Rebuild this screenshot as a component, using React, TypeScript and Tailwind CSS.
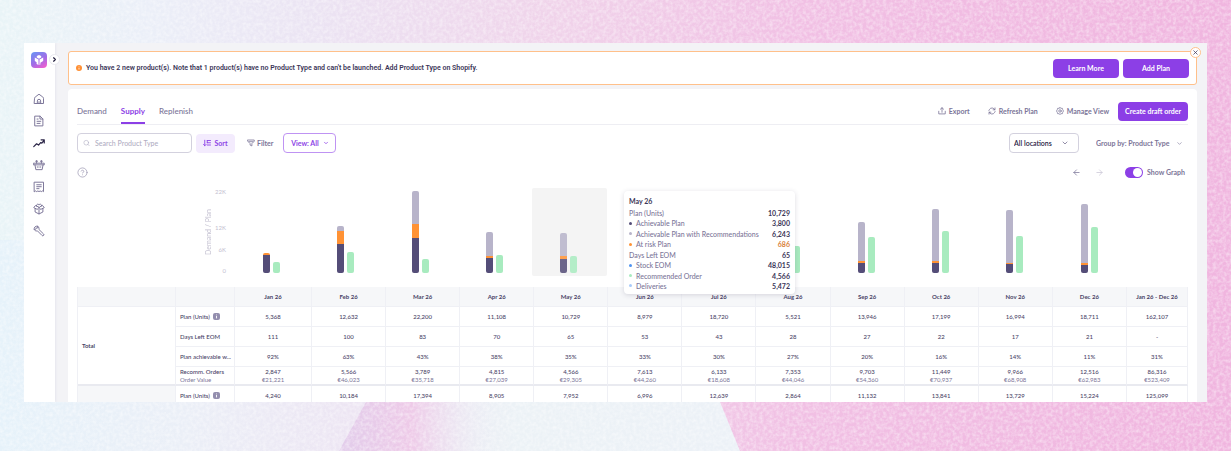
import { useState } from 'react';
import type { ReactNode } from 'react';
import { ArrowLeft, ArrowRight, ChevronDown, ChevronRight, CircleHelp, Search, X } from 'lucide-react';

type Month = {
  label: string;
  achievable: number;
  atRisk: number;
  withRecs: number;
  order: number;
};

// plot area is 82px tall for the biggest month
const PX_PER_UNIT = 82 / 22200;

const months: Month[] = [
  { label: 'Jan 26', achievable: 4940, atRisk: 428, withRecs: 0, order: 2847 },
  { label: 'Feb 26', achievable: 7958, atRisk: 3390, withRecs: 1284, order: 5566 },
  { label: 'Mar 26', achievable: 9546, atRisk: 3700, withRecs: 8954, order: 3789 },
  { label: 'Apr 26', achievable: 4121, atRisk: 580, withRecs: 6407, order: 4815 },
  { label: 'May 26', achievable: 3800, atRisk: 686, withRecs: 6243, order: 4566 },
  { label: 'Jun 26', achievable: 2963, atRisk: 500, withRecs: 5516, order: 7613 },
  { label: 'Jul 26', achievable: 5616, atRisk: 600, withRecs: 12504, order: 6133 },
  { label: 'Aug 26', achievable: 1490, atRisk: 400, withRecs: 3631, order: 7353 },
  { label: 'Sep 26', achievable: 2789, atRisk: 560, withRecs: 10597, order: 9703 },
  { label: 'Oct 26', achievable: 2751, atRisk: 560, withRecs: 13888, order: 11449 },
  { label: 'Nov 26', achievable: 2379, atRisk: 320, withRecs: 14295, order: 9966 },
  { label: 'Dec 26', achievable: 2058, atRisk: 560, withRecs: 16093, order: 12516 },
];

const rows = {
  plan: ['5,368', '12,632', '22,200', '11,108', '10,729', '8,979', '18,720', '5,521', '13,946', '17,199', '16,994', '18,711', '162,107'],
  days: ['111', '100', '83', '70', '65', '53', '43', '28', '27', '22', '17', '21', '-'],
  achievable: ['92%', '63%', '43%', '38%', '35%', '33%', '30%', '27%', '20%', '16%', '14%', '11%', '31%'],
  orders: ['2,847', '5,566', '3,789', '4,815', '4,566', '7,613', '6,133', '7,353', '9,703', '11,449', '9,966', '12,516', '86,316'],
  value: ['€21,221', '€46,023', '€35,718', '€27,039', '€29,305', '€44,260', '€18,608', '€44,046', '€54,360', '€70,937', '€68,908', '€62,983', '€523,409'],
  nextPlan: ['4,240', '10,184', '17,394', '8,905', '7,952', '6,996', '12,639', '2,864', '11,132', '13,841', '13,729', '15,224', '125,099'],
};

const tooltipRows = [
  { label: 'Plan (Units)', value: '10,729' },
  { label: 'Achievable Plan', value: '3,800', dot: 'bg-[#544d78]' },
  { label: 'Achievable Plan with Recommendations', value: '6,243', dot: 'bg-[#b8b4ca]' },
  { label: 'At risk Plan', value: '686', dot: 'bg-[#ff9234]', tone: 'text-[#d9823b]' },
  { label: 'Days Left EOM', value: '65' },
  { label: 'Stock EOM', value: '48,015', dot: 'bg-[#4f93f0]' },
  { label: 'Recommended Order', value: '4,566', dot: 'bg-[#a8ebbf]' },
  { label: 'Deliveries', value: '5,472', dot: 'bg-[#a9cbfa]' },
];

const Backdrop = () => (
  <svg
    className="absolute inset-0 h-full w-full"
    viewBox="0 0 1231 451"
    preserveAspectRatio="none"
    aria-hidden="true"
  >
    <defs>
      <linearGradient id="sky" x1="0" x2="1" y1="0" y2="0">
        <stop offset="0" stopColor="#e9f4f7" />
        <stop offset="0.12" stopColor="#ebeff8" />
        <stop offset="0.25" stopColor="#ebe4f3" />
        <stop offset="0.45" stopColor="#f0d3ea" />
        <stop offset="0.65" stopColor="#f1c0e4" />
        <stop offset="1" stopColor="#f0b5df" />
      </linearGradient>
      <linearGradient id="pale" x1="0" x2="1" y1="0" y2="0">
        <stop offset="0" stopColor="#e6f2fa" />
        <stop offset="0.25" stopColor="#ebeff7" />
        <stop offset="0.48" stopColor="#ede5f3" />
        <stop offset="0.7" stopColor="#ecf2f6" />
        <stop offset="1" stopColor="#ecf1f7" />
      </linearGradient>
      <linearGradient id="fold" x1="0" x2="1" y1="0" y2="0">
        <stop offset="0" stopColor="#e2cdeb" />
        <stop offset="0.45" stopColor="#eecae8" />
        <stop offset="1" stopColor="#ecf2f6" stopOpacity="0" />
      </linearGradient>
      <filter id="grain" x="0" y="0" width="100%" height="100%" colorInterpolationFilters="sRGB">
        <feTurbulence type="fractalNoise" baseFrequency="0.3" numOctaves="2" seed="4" />
        <feColorMatrix values="0 0 0 0 1  0 0 0 0 1  0 0 0 0 1  0.9 0 0 0 -0.32" />
      </filter>
    </defs>
    <rect width="1231" height="451" fill="url(#sky)" />
    <path d="M0 240H690L720 402L740 451H0Z" fill="url(#pale)" />
    <path d="M366 402H500V451H339Z" fill="url(#fold)" />
    <rect width="1231" height="451" filter="url(#grain)" />
  </svg>
);

const Glyph = ({ children, size = 12 }: { children: ReactNode; size?: number }) => (
  <svg
    width={size}
    height={size}
    viewBox="0 0 16 16"
    fill="none"
    stroke="currentColor"
    strokeWidth="1.3"
    strokeLinecap="round"
    strokeLinejoin="round"
    aria-hidden="true"
  >
    {children}
  </svg>
);

const navItems = [
  {
    name: 'Home',
    icon: <path d="M2 7.2C2 6.4 2.3 5.9 2.9 5.4L8 1.6l5.1 3.8c.6.5.9 1 .9 1.8V14H2zM5.8 14v-3.4a2.2 2.2 0 0 1 4.4 0V14M8 11.6V14" />,
  },
  {
    name: 'Documents',
    icon: <path d="M2.8 1.5h6.7l3.7 3.7v9.3H2.8zM9.3 1.7v3.7h3.7M5.4 8.4h5M5.4 11.2h4M5.4 5.4h1.4" />,
  },
  {
    name: 'Planning',
    active: true,
    icon: <path strokeWidth="1.6" d="M1 12.8 4.8 9l2.6 1.8 2.8-3.4 1.6.8L15 4.2M10.8 3.8H15V8" />,
  },
  {
    name: 'Orders',
    icon: <path d="M1 5.6h14v2.2H1zM2.6 7.8l1.2 6.4h8.4l1.2-6.4M4.8 5.6V2M11.2 5.6V2M3.6 3h2.4M10 3h2.4M5.8 10.4v.6M8 10.4v.6M10.2 10.4v.6" />,
  },
  {
    name: 'Invoices',
    icon: <path d="M2 1.6h12v12.6l-1.5-1-1.5 1-1.5-1-1.5 1-1.5-1-1.5 1-1.5-1-1.5 1zM5 5h6M5 7.6h6M5 10.2h3" />,
  },
  {
    name: 'Inventory',
    icon: <path d="M8 5.6 3.2 3.4 1 6.2l4.9 2.4L8 5.6l2.1 3L15 6.2l-2.2-2.8zM2.8 7.6V12L8 14.6l5.2-2.6V7.6M8 8.4v6.2M4.6 4a1.8 1.8 0 0 1 3.4-1.2A1.8 1.8 0 0 1 11.4 4" />,
  },
  {
    name: 'Tools',
    icon: <path d="M6.2 1.7a3.6 3.6 0 0 0-4.5 4.5l2-.6.9-1.8 1.6-.1zM1.7 6.2c1 1.6 2.6 2.1 4.2 1.6l6.2 6.2a1.4 1.4 0 0 0 2-2L7.9 5.9c.4-1.7-.1-3.3-1.7-4.2" />,
  },
];

const Sidebar = () => (
  <aside className="relative z-10 flex w-[31px] shrink-0 flex-col items-center bg-white pt-[9px] pr-px shadow-[1px_0_2px_#e7e7ee]">
    <svg width="16" height="16" viewBox="0 0 16 16" aria-label="Logo" role="img">
      <defs>
        <linearGradient id="logo" x1="0.2" x2="0.8" y1="0" y2="1">
          <stop offset="0" stopColor="#6f90f3" />
          <stop offset="0.55" stopColor="#a26ce6" />
          <stop offset="1" stopColor="#ee5fd0" />
        </linearGradient>
      </defs>
      <rect width="16" height="16" rx="4" fill="url(#logo)" />
      <path d="M8 3 10.2 4.1V5.6L8 6.8 5.8 5.6V4.1z" fill="#fff" />
      <path d="M3.8 5.4 7.5 7.6V13L5.6 11.9V10.2L3.8 9.1zM12.2 5.4 8.5 7.6V13L9.4 12.4V10.8L12.2 9.1z" fill="#fff" />
    </svg>
    <button
      aria-label="Expand menu"
      className="absolute top-[11px] -right-[5px] flex size-[11px] items-center justify-center rounded-full border border-[#e9e9f0] bg-white text-[#1f1b3a]"
    >
      <ChevronRight size={7} strokeWidth={4} />
    </button>
    <nav className="mt-[20px] flex flex-col">
      {navItems.map(item => (
        <a
          key={item.name}
          href="#"
          aria-label={item.name}
          className={`flex h-[22px] items-center ${item.active ? 'text-[#2b2547]' : 'text-[#7b7598]'}`}
        >
          <Glyph>{item.icon}</Glyph>
        </a>
      ))}
    </nav>
  </aside>
);

const Banner = () => (
  <div className="relative flex h-[34px] items-center rounded-[3px] border border-[#ffc08a] bg-white pr-[7px] pl-[7px]">
    <svg width="6" height="6" viewBox="0 0 6 6" aria-hidden="true">
      <circle cx="3" cy="3" r="3" fill="#ff8f33" />
      <path d="M3 2.7v1.8M3 1.4v.5" stroke="#fff" strokeWidth="0.8" />
    </svg>
    <p className="ml-1 font-['Roboto',sans-serif] text-[7px] font-semibold text-[#3c3658]">
      You have 2 new product(s). Note that 1 product(s) have no Product Type and can't be launched. Add Product Type on Shopify.
    </p>
    <div className="ml-auto flex gap-1 text-[7px] font-bold text-white">
      <button className="h-[19px] w-[66px] rounded-[4px] bg-[#8c3fe6]">Learn More</button>
      <button className="h-[19px] w-[66px] rounded-[4px] bg-[#8c3fe6]">Add Plan</button>
    </div>
    <button
      aria-label="Dismiss"
      className="absolute -top-[5px] -right-[5px] flex size-[11px] items-center justify-center rounded-full border border-[#ffc08a] bg-white text-[#3c3658]"
    >
      <X size={7} strokeWidth={2.5} />
    </button>
  </div>
);

const TabBar = () => {
  const [tab, setTab] = useState('Supply');

  return (
    <div className="flex h-[25px] items-start border-b border-[#eeeef3]">
      <div role="tablist" className="flex gap-[14px] text-[8px] font-medium">
        {['Demand', 'Supply', 'Replenish'].map(name => (
          <button
            key={name}
            role="tab"
            aria-selected={tab === name}
            onClick={() => setTab(name)}
            className={`h-[24px] border-b-2 ${
              tab === name ? 'border-[#8c3fe6] font-bold text-[#8c3fe6]' : 'border-transparent text-[#7b7598]'
            }`}
          >
            {name}
          </button>
        ))}
      </div>
      <div className="ml-auto flex h-[22px] items-center text-[7px] font-bold text-[#7b7598]">
        <button className="flex items-center gap-[3px]">
          <Glyph size={8}>
            <path strokeWidth="1.6" d="M8 10.5V1.5M4.8 4.4 8 1.5l3.2 2.9M1.5 8.5v5.3h13V8.5" />
          </Glyph>
          Export
        </button>
        <button className="ml-[18px] flex items-center gap-[3px]">
          <Glyph size={8}>
            <path strokeWidth="1.6" d="M13.6 5.6A6 6 0 0 0 3 4.8L1.8 7M2.4 10.4A6 6 0 0 0 13 11.2L14.2 9M14 1.8v3.8h-3.8M2 14.2v-3.8h3.8" />
          </Glyph>
          Refresh Plan
        </button>
        <button className="ml-[18px] flex items-center gap-[3px]">
          <Glyph size={8}>
            <path strokeWidth="1.5" d="M8 1 10 2.6 12.8 2.7 13.4 5.3 15 8 13.4 10.7 12.8 13.3 10 13.4 8 15 6 13.4 3.2 13.3 2.6 10.7 1 8 2.6 5.3 3.2 2.7 6 2.6z" />
            <circle strokeWidth="1.5" cx="8" cy="8" r="2.5" />
          </Glyph>
          Manage View
        </button>
        <button className="ml-[9px] h-[19px] rounded-[4px] bg-[#8c3fe6] px-[7px] text-white">
          Create draft order
        </button>
      </div>
    </div>
  );
};

const Filters = () => (
  <div className="mt-2 flex h-[20px] items-center text-[7px] font-bold">
    <label className="flex h-full w-[115px] items-center gap-[5px] rounded-[4px] border border-[#d3d1de] px-[5px] text-[#b1aec3]">
      <Search size={8} />
      <input
        type="search"
        aria-label="Search Product Type"
        placeholder="Search Product Type"
        className="w-full min-w-0 text-[7px] font-medium outline-none placeholder:text-[#b1aec3]"
      />
    </label>
    <button className="ml-[4px] flex h-[19px] w-[39px] items-center justify-center gap-[3px] rounded-[4px] bg-[#f3ebfd] text-[#8c3fe6]">
      <Glyph size={8}>
        <path strokeWidth="1.8" d="M3.5 2.5v11M1 11l2.5 2.5L6 11M8.5 3H15M8.5 7.5H15M8.5 12H15M8.5 3v4.5" />
      </Glyph>
      Sort
    </button>
    <button className="ml-[12px] flex items-center gap-[2px] text-[#7b7598]">
      <Glyph size={8}>
        <path strokeWidth="1.6" d="M1.5 2h13v2.4L9.8 9.2v4.6l-3.6-1.6v-3L1.5 4.4zM4 5.4h8" />
      </Glyph>
      Filter
    </button>
    <button
      aria-haspopup="menu"
      className="ml-[10px] flex h-full w-[53px] items-center justify-center gap-[4px] rounded-[4px] border border-[#bf93f3] text-[#8c3fe6]"
    >
      View: All
      <ChevronDown size={6} strokeWidth={3} />
    </button>
    <div className="relative ml-auto flex h-full w-[70px] items-center">
      <select
        aria-label="Location"
        className="h-full w-full appearance-none rounded-[4px] border border-[#d3d1de] px-1 font-semibold text-[#2b2547]"
      >
        <option>All locations</option>
      </select>
      <ChevronDown size={8} className="pointer-events-none absolute right-[10px] text-[#5d567d]" />
    </div>
    <div className="relative ml-[17px] flex h-full w-[92px] items-center">
      <select aria-label="Group by" className="h-full w-full appearance-none text-[#7b7598]">
        <option>Group by: Product Type</option>
      </select>
      <ChevronDown size={7} className="pointer-events-none absolute right-[5px] text-[#7b7598]" />
    </div>
  </div>
);

const GraphControls = ({ shown, onToggle }: { shown: boolean; onToggle: () => void }) => (
  <div className="mt-[13px] flex h-[12px] items-center pr-[3px] text-[7px] font-bold text-[#7b7598]">
    <button aria-label="Help">
      <CircleHelp size={11} strokeWidth={1.6} className="text-[#9d99b3]" />
    </button>
    <button aria-label="Previous months" className="ml-auto">
      <ArrowLeft size={9} />
    </button>
    <button aria-label="Next months" className="ml-[14px] text-[#c9c6d6]">
      <ArrowRight size={9} />
    </button>
    <label className="ml-[21px] flex items-center gap-[4px]">
      <input type="checkbox" checked={shown} onChange={onToggle} className="peer sr-only" />
      <span className="flex h-[11px] w-[18px] items-center rounded-full bg-[#c9c6d6] p-px peer-checked:justify-end peer-checked:bg-[#8c3fe6]">
        <span className="size-[9px] rounded-full bg-white" />
      </span>
      Show Graph
    </label>
  </div>
);

const Tooltip = () => (
  <div className="absolute top-[3px] left-[389px] z-20 flex h-[103px] w-[171px] flex-col rounded-[4px] bg-white px-[5px] pt-[5px] pb-[3px] text-[7px] leading-[10px] shadow-[0_1px_5px_rgba(60,54,88,0.18)]">
    <p className="font-bold text-[#3c3658]">May 26</p>
    <dl className="mt-[2px] flex flex-1 flex-col justify-between">
      {tooltipRows.map(row => (
        <div key={row.label} className="flex items-center">
          {row.dot && <span className={`mr-[4px] size-[3px] rounded-full ${row.dot}`} />}
          <dt className="font-medium text-[#7b7598]">{row.label}</dt>
          <dd className={`ml-auto font-bold ${row.tone ?? 'text-[#3c3658]'}`}>{row.value}</dd>
        </div>
      ))}
    </dl>
  </div>
);

const Chart = () => (
  <div className="mt-[10px] flex h-[88px] pr-[61px]">
    <div className="flex w-[158px] shrink-0 justify-end gap-[3px] pr-[9px] text-[#c4c1d1]">
      <span className="rotate-180 self-center text-[7px] leading-[8px] [writing-mode:vertical-rl]">Demand / Plan</span>
      <div className="flex flex-col text-right text-[6px] leading-[8px]">
        <span>22K</span>
        <span className="mt-[28px]">12K</span>
        <span className="mt-[14px]">6K</span>
        <span className="mt-[13px]">0</span>
      </div>
    </div>
    <div className="relative flex flex-1">
      {months.map(m => {
        const hovered = m.label === 'May 26';
        return (
          <div
            key={m.label}
            className={`flex flex-1 items-end gap-[3px] rounded-[2px] pb-[3px] pl-[28px] ${hovered ? 'bg-[#f4f4f4]' : ''}`}
          >
            <div className={`flex w-[7px] flex-col overflow-hidden rounded-[2px] ${hovered ? 'opacity-85' : ''}`}>
              <div className="bg-[#b8b4ca]" style={{ height: m.withRecs * PX_PER_UNIT }} />
              <div className="bg-[#ff9234]" style={{ height: m.atRisk * PX_PER_UNIT }} />
              <div className="bg-[#544d78]" style={{ height: m.achievable * PX_PER_UNIT }} />
            </div>
            <div
              className={`w-[7px] rounded-[2px] bg-[#a8ebbf] ${hovered ? 'opacity-85' : ''}`}
              style={{ height: m.order * PX_PER_UNIT }}
            />
          </div>
        );
      })}
      <Tooltip />
    </div>
  </div>
);

const InfoMark = () => (
  <span className="ml-[2px] inline-flex size-[7px] items-center justify-center rounded-[2px] bg-[#938eae] align-middle">
    <svg width="5" height="5" viewBox="0 0 5 5" aria-hidden="true">
      <path d="M2.5 2v2.4M2.5.6v.7" stroke="#fff" strokeWidth="0.9" />
    </svg>
  </span>
);

const cell = 'border-r border-b border-[#eff0f5] p-0';
const lastCell = 'border-r border-b-2 border-r-[#eff0f5] border-b-[#e9eaf0] p-0';

const MetricRow = ({
  name,
  values,
  lead,
}: {
  name: ReactNode;
  values: string[];
  lead?: ReactNode;
}) => (
  <tr className="h-[20px]">
    {lead}
    <th scope="row" className={`${cell} pl-[4px] text-left font-medium whitespace-nowrap`}>
      {name}
    </th>
    {values.map((v, i) => (
      <td key={i} className={cell}>{v}</td>
    ))}
  </tr>
);

const PlanTable = () => (
  <table className="mt-[11px] w-full table-fixed border-separate border-spacing-0 border-l border-[#eff0f5] text-center text-[6px] leading-[8px] font-medium text-[#4a4467]">
    <colgroup>
      <col className="w-[98px]" />
      <col className="w-[59px]" />
      <col className="w-[77px]" />
      {months.slice(1).map(m => (
        <col key={m.label} />
      ))}
      <col className="w-[61px]" />
    </colgroup>
    <thead>
      <tr className="h-[20px] bg-[#f6f7f9]">
        <td className={cell} />
        <td className={cell} />
        {[...months.map(m => m.label), 'Jan 26 - Dec 26'].map(label => (
          <th key={label} scope="col" className={`${cell} font-bold`}>{label}</th>
        ))}
      </tr>
    </thead>
    <tbody>
      <MetricRow
        name={<>Plan (Units) <InfoMark /></>}
        values={rows.plan}
        lead={
          <th rowSpan={4} scope="rowgroup" className={`${lastCell} pl-[4px] text-left font-bold`}>
            Total
          </th>
        }
      />
      <MetricRow name="Days Left EOM" values={rows.days} />
      <MetricRow name="Plan achievable w..." values={rows.achievable} />
      <tr className="h-[19px]">
        <th scope="row" className={`${lastCell} pl-[4px] text-left font-medium`}>
          Recomm. Orders
          <span className="block font-normal text-[#7b7598]">Order Value</span>
        </th>
        {rows.orders.map((v, i) => (
          <td key={i} className={lastCell}>
            {v}
            <span className="block font-normal text-[#7b7598]">{rows.value[i]}</span>
          </td>
        ))}
      </tr>
      <MetricRow
        name={<>Plan (Units) <InfoMark /></>}
        values={rows.nextPlan}
        lead={<td className={`${cell} bg-[#f6f7f9]`} />}
      />
    </tbody>
  </table>
);

export default function App() {
  const [showGraph, setShowGraph] = useState(true);

  return (
    <div className="relative h-screen overflow-hidden px-6 pt-[43px] pb-[49px] font-['Lato',sans-serif]">
      <Backdrop />
      <div className="relative flex h-full overflow-hidden bg-[#f3f3f6]">
        <Sidebar />
        <main className="min-w-0 flex-1 pt-2 pr-[10px] pl-[13px]">
          <Banner />
          <section className="mt-1 rounded-[4px] bg-white px-[9px] pt-[11px]">
            <TabBar />
            <Filters />
            <GraphControls shown={showGraph} onToggle={() => setShowGraph(!showGraph)} />
            {showGraph && <Chart />}
            <PlanTable />
          </section>
        </main>
      </div>
    </div>
  );
}
